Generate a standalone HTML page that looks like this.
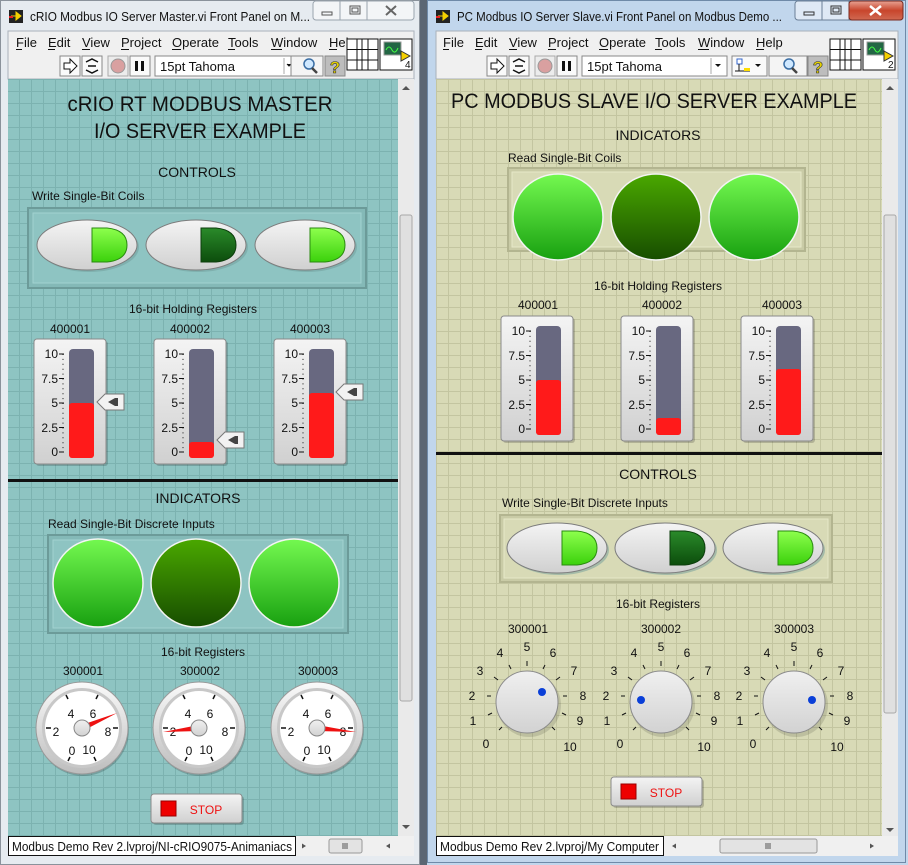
<!DOCTYPE html>
<html><head><meta charset="utf-8"><style>
html,body{margin:0;padding:0;width:908px;height:865px;overflow:hidden;background:#6d7c8a}
svg{display:block;font-family:"Liberation Sans",sans-serif}
</style></head><body>
<svg width="908" height="865" viewBox="0 0 908 865" xmlns="http://www.w3.org/2000/svg">
<defs>
<pattern id="gT" x="7" y="7" width="12" height="12" patternUnits="userSpaceOnUse"><rect width="12" height="12" fill="#8ec4c2"/><path d="M0 0.5H12M0.5 0V12" stroke="#7cb2b0" stroke-width="1"/></pattern>
<pattern id="gB" x="4" y="7" width="12" height="12" patternUnits="userSpaceOnUse"><rect width="12" height="12" fill="#d8dab6"/><path d="M0 0.5H12M0.5 0V12" stroke="#c3c5a0" stroke-width="1"/></pattern>
<linearGradient id="btn" x1="0" y1="0" x2="0" y2="1"><stop offset="0" stop-color="#f4f4f4"/><stop offset="1" stop-color="#d0d0d0"/></linearGradient>
<linearGradient id="ledOn" x1="0" y1="0" x2="0" y2="1"><stop offset="0" stop-color="#8dff4d"/><stop offset="1" stop-color="#3bd10c"/></linearGradient>
<linearGradient id="ledOff" x1="0" y1="0" x2="0" y2="1"><stop offset="0" stop-color="#2a8a2a"/><stop offset="1" stop-color="#0c4d0c"/></linearGradient>
<linearGradient id="bigOn" x1="0" y1="0" x2="0" y2="1"><stop offset="0" stop-color="#74f950"/><stop offset="1" stop-color="#18a010"/></linearGradient>
<linearGradient id="bigOff" x1="0" y1="0" x2="0" y2="1"><stop offset="0" stop-color="#4aa800"/><stop offset="1" stop-color="#174d00"/></linearGradient>
<linearGradient id="knob" x1="0" y1="0" x2="0" y2="1"><stop offset="0" stop-color="#f0f0f0"/><stop offset="1" stop-color="#d2d2d2"/></linearGradient>
<linearGradient id="bez" x1="0" y1="0" x2="0" y2="1"><stop offset="0" stop-color="#fafafa"/><stop offset="1" stop-color="#bdbdbd"/></linearGradient>
<linearGradient id="redC" x1="0" y1="0" x2="0" y2="1"><stop offset="0" stop-color="#e8a393"/><stop offset="0.5" stop-color="#c8452c"/><stop offset="1" stop-color="#d06a52"/></linearGradient>

<g id="wbtn"><ellipse cx="2" cy="2" rx="50" ry="25" fill="#6f9b99" opacity="0.5"/><ellipse cx="0" cy="0" rx="50" ry="25" fill="url(#btn)" stroke="#7c7c7c"/></g>
<path id="ledD" d="M5,-17 H20 Q40,-15 40,0 Q40,15 20,17 H5 Z"/>

<g id="sbox"><rect x="2" y="2" width="72" height="125" rx="3" fill="#000" opacity="0.18"/><rect x="0" y="0" width="72" height="125" rx="3" fill="url(#btn)" stroke="#8a8a8a"/>
<rect x="35" y="10" width="25" height="109" rx="4" fill="#686880"/>
<g font-size="12" text-anchor="end" fill="#111"><text x="24" y="19">10</text><text x="24" y="44">7.5</text><text x="24" y="68">5</text><text x="24" y="93">2.5</text><text x="24" y="117">0</text></g>
<path d="M25 15H30M25 39.5H30M25 64H30M25 88.5H30M25 113H30" stroke="#111"/>
<path d="M29 15V113" stroke="#111" stroke-dasharray="1 3.9"/>
</g>
<g id="thumb"><path d="M0,8 L8,0 H27 V16 H8 Z" fill="#f2f2f2" stroke="#777"/><path d="M11,8 L18,4 V12 Z" fill="#444"/><rect x="18" y="4" width="3" height="8" fill="#444"/></g>

<g id="gauge"><circle cx="1" cy="2" r="46" fill="#000" opacity="0.18"/><circle r="46" fill="url(#bez)" stroke="#999"/><circle r="40" fill="#c8c8c8"/><circle r="37" fill="#fff"/>
<path d="M-16,-33 L-14,-29 M16,-33 L14,-29 M-36,0 H-31 M36,0 H31 M-14,33 L-12,29 M14,33 L12,29" stroke="#111" stroke-width="1.5"/>
<g font-size="12" text-anchor="middle" fill="#111"><text x="-11" y="-10">4</text><text x="11" y="-10">6</text><text x="-26" y="8">2</text><text x="26" y="8">8</text><text x="-10" y="27">0</text><text x="7" y="26">10</text></g></g>
<g id="hub"><circle r="8" fill="url(#knob)" stroke="#888"/></g>

<g id="knobG"><circle cx="2" cy="3" r="32" fill="#000" opacity="0.12"/><circle r="31" fill="url(#knob)" stroke="#8a8a8a"/>
<g stroke="#111"><path d="M-25,25 L-28,28"/><path d="M-35,11 L-39,13"/><path d="M-36,-6 L-40,-6"/><path d="M-29,-22 L-33,-25"/><path d="M-16,-33 L-18,-37"/><path d="M0,-36 V-41"/><path d="M16,-33 L18,-37"/><path d="M29,-22 L33,-25"/><path d="M36,-6 L40,-6"/><path d="M35,11 L39,13"/><path d="M25,25 L28,28"/></g>
<g font-size="12" text-anchor="middle" fill="#111"><text x="-41" y="46">0</text><text x="-54" y="23">1</text><text x="-55" y="-2">2</text><text x="-47" y="-27">3</text><text x="-27" y="-45">4</text><text x="0" y="-51">5</text><text x="26" y="-45">6</text><text x="47" y="-27">7</text><text x="56" y="-2">8</text><text x="53" y="23">9</text><text x="43" y="49">10</text></g></g>

<g id="stopb"><rect x="2" y="2" width="91" height="29" rx="3" fill="#000" opacity="0.18"/><rect width="91" height="29" rx="3" fill="url(#btn)" stroke="#8a8a8a"/><rect x="10" y="7" width="15" height="15" fill="#ee0000" stroke="#900"/><text x="55" y="20" font-size="12" fill="#ee1111" text-anchor="middle">STOP</text></g>
</defs>

<!-- LEFT WINDOW frame -->
<rect x="0" y="0" width="420" height="865" fill="#e6ebf0"/>
<rect x="0.5" y="0.5" width="419" height="864" fill="none" stroke="#8a929b"/>
<rect x="420" y="0" width="7" height="865" fill="#5b6673"/>
<rect x="9" y="10" width="14" height="13" fill="#222"/><path d="M11,16 H21 M16,12 L21,16 L16,20 Z" stroke="#f5d000" fill="#f5d000"/><path d="M9,17 H13" stroke="#e22" stroke-width="2"/>
<text x="30" y="21" font-size="13" fill="#111" textLength="280" lengthAdjust="spacingAndGlyphs">cRIO Modbus IO Server Master.vi Front Panel on M...</text>
<rect x="313" y="1" width="101" height="19" rx="3" fill="#f3f5f7" stroke="#9aa4ae"/>
<path d="M340 1V20M367 1V20" stroke="#9aa4ae"/>
<rect x="322" y="12" width="10" height="3" fill="none" stroke="#555"/>
<rect x="350" y="6" width="10" height="8" fill="none" stroke="#555"/><rect x="352" y="8" width="6" height="4" fill="none" stroke="#555"/>
<path d="M386,6 L396,15 M396,6 L386,15" stroke="#666" stroke-width="2"/>
<rect x="8" y="31" width="406" height="48" fill="#f0f0f0" stroke="#a9b1ba"/>
<g font-size="13" fill="#111"><text x="16" y="47">File</text><text x="48" y="47">Edit</text><text x="82" y="47">View</text><text x="121" y="47">Project</text><text x="172" y="47">Operate</text><text x="228" y="47">Tools</text><text x="271" y="47">Window</text><text x="329" y="47">Hel</text></g>
<g stroke="#111"><path d="M16 49.5H22M48 49.5H55M82 49.5H90M121 49.5H129M172 49.5H181M228 49.5H235M271 49.5H282M329 49.5H337"/></g>
<rect x="60" y="56" width="20" height="20" fill="#fafafa" stroke="#888"/><path d="M64,63 H70 V59 L77,66 L70,73 V69 H64 Z" fill="#fff" stroke="#111"/>
<rect x="82" y="56" width="20" height="20" fill="#fafafa" stroke="#888"/><path d="M86,62 L92,59 L98,62 M86,70 L92,73 L98,70 M88,66 H96" stroke="#111" fill="none" stroke-width="1.5"/>
<rect x="108" y="56" width="20" height="20" fill="#ececec" stroke="#aaa"/><circle cx="118" cy="66" r="7" fill="#d9a0a0" stroke="#999"/>
<rect x="130" y="56" width="20" height="20" fill="#fafafa" stroke="#888"/><rect x="135" y="61" width="3" height="10" fill="#111"/><rect x="141" y="61" width="3" height="10" fill="#111"/>
<rect x="155" y="56" width="136" height="20" fill="#fff" stroke="#888"/><text x="160" y="71" font-size="13" fill="#111">15pt Tahoma</text><path d="M284,58 V74" stroke="#aaa"/><path d="M287,64 L289,66 L291,64" fill="#111" stroke="#111"/>
<rect x="291" y="56" width="32" height="20" fill="#f4f4f4" stroke="#888"/><circle cx="309" cy="64" r="5" fill="#cfe8ff" stroke="#3a6ea5" stroke-width="1.5"/><path d="M312,68 L317,73" stroke="#444" stroke-width="2.5"/>
<rect x="325" y="56" width="20" height="20" fill="#bdbdbd" stroke="#888"/><text x="335" y="73" font-size="17" font-weight="bold" fill="#e8d400" stroke="#333" stroke-width="0.6" text-anchor="middle">?</text>
<rect x="347" y="39" width="31" height="31" fill="#fff" stroke="#111"/><path d="M347 49.5H378M347 60H378M357 39V70M368 39V70M362 39V70" stroke="#111"/>
<rect x="380" y="39" width="32" height="31" fill="#fff" stroke="#111"/><rect x="384" y="42" width="17" height="13" fill="#264" stroke="#999"/><path d="M386,50 Q389,44 392,50 Q395,55 398,48" stroke="#4f4" fill="none"/><path d="M401,51 L410,56 L401,61 Z" fill="#f5d000" stroke="#333"/><text x="405" y="68" font-size="10" fill="#111">4</text>
<!-- left panel -->
<rect x="8" y="79" width="390" height="757" fill="url(#gT)"/>
<rect x="398" y="79" width="16" height="757" fill="#eaeaea"/><rect x="400" y="215" width="12" height="486" rx="2" fill="#e0e0e0" stroke="#a8a8a8"/>
<path d="M402,90 L406,86 L410,90 Z" fill="#555"/><path d="M402,825 L406,829 L410,825 Z" fill="#555"/>
<rect x="8" y="836" width="406" height="20" fill="#f0f0f0"/>
<rect x="8.5" y="836.5" width="287" height="19" fill="#fff" stroke="#111"/>
<text x="12" y="851" font-size="12.5" fill="#111" textLength="280" lengthAdjust="spacingAndGlyphs">Modbus Demo Rev 2.lvproj/NI-cRIO9075-Animaniacs</text>
<rect x="329" y="839" width="33" height="14" rx="2" fill="#e3e3e3" stroke="#999"/><path d="M343 843V849M345 843V849M347 843V849" stroke="#555"/>
<path d="M306,846 L302,843.5 V848.5 Z M386,846 L390,843.5 V848.5 Z" fill="#555"/>

<g font-size="21" text-anchor="middle" fill="#111"><text x="200" y="111" textLength="265" lengthAdjust="spacingAndGlyphs">cRIO RT MODBUS MASTER</text><text x="200" y="138" textLength="212" lengthAdjust="spacingAndGlyphs">I/O SERVER EXAMPLE</text></g>
<text x="197" y="177" font-size="14" text-anchor="middle" fill="#111">CONTROLS</text>
<text x="32" y="200" font-size="12" fill="#111">Write Single-Bit Coils</text>
<rect x="28" y="208" width="338" height="80" fill="#84b9b7" stroke="#6c9b99" stroke-width="2"/><rect x="33" y="213" width="328" height="70" fill="#8ec4c2" stroke="#a2d2d0"/>
<use href="#wbtn" x="87" y="245"/><use href="#wbtn" x="196" y="245"/><use href="#wbtn" x="305" y="245"/>
<use href="#ledD" x="87" y="245" fill="url(#ledOn)" stroke="#2a8a10"/><use href="#ledD" x="196" y="245" fill="url(#ledOff)" stroke="#0c3d0c"/><use href="#ledD" x="305" y="245" fill="url(#ledOn)" stroke="#2a8a10"/>
<text x="193" y="313" font-size="12" text-anchor="middle" fill="#111">16-bit Holding Registers</text>
<g font-size="12" text-anchor="middle" fill="#111"><text x="70" y="333">400001</text><text x="190" y="333">400002</text><text x="310" y="333">400003</text></g>
<use href="#sbox" x="34" y="339"/><use href="#sbox" x="154" y="339"/><use href="#sbox" x="274" y="339"/>
<rect x="69" y="403" width="25" height="55" rx="3" fill="#ff1a1a"/><rect x="189" y="442" width="25" height="16" rx="3" fill="#ff1a1a"/><rect x="309" y="393" width="25" height="65" rx="3" fill="#ff1a1a"/>
<use href="#thumb" x="97" y="394"/><use href="#thumb" x="217" y="432"/><use href="#thumb" x="336" y="384"/>
<rect x="8" y="479" width="390" height="3" fill="#111"/>
<text x="198" y="503" font-size="14" text-anchor="middle" fill="#111">INDICATORS</text>
<text x="48" y="528" font-size="12" fill="#111">Read Single-Bit Discrete Inputs</text>
<rect x="48" y="535" width="300" height="98" fill="#84b9b7" stroke="#6c9b99" stroke-width="2"/><rect x="53" y="540" width="290" height="88" fill="#8ec4c2" stroke="#a2d2d0"/>
<g stroke="#f4f4f4" stroke-width="1.5"><ellipse cx="98" cy="583" rx="45" ry="44" fill="url(#bigOn)"/><ellipse cx="196" cy="583" rx="45" ry="44" fill="url(#bigOff)"/><ellipse cx="294" cy="583" rx="45" ry="44" fill="url(#bigOn)"/></g>
<text x="203" y="656" font-size="12" text-anchor="middle" fill="#111">16-bit Registers</text>
<g font-size="12" text-anchor="middle" fill="#111"><text x="83" y="675">300001</text><text x="200" y="675">300002</text><text x="318" y="675">300003</text></g>
<use href="#gauge" x="82" y="728"/><use href="#gauge" x="199" y="728"/><use href="#gauge" x="317" y="728"/>
<polygon points="117,713 83.2,730.8 80.8,725.2" fill="#ee1111"/>
<polygon points="163,732 199.3,731 198.7,725" fill="#ee1111"/>
<polygon points="356,732 317.3,725 316.7,731" fill="#ee1111"/>
<use href="#hub" x="82" y="728"/><use href="#hub" x="199" y="728"/><use href="#hub" x="317" y="728"/>
<use href="#stopb" x="151" y="794"/>

<!-- RIGHT WINDOW -->
<rect x="427" y="0" width="481" height="865" fill="#c1d6ec"/>
<rect x="427.5" y="0.5" width="478" height="862" fill="none" stroke="#6f8aa8"/>
<rect x="436" y="10" width="14" height="13" fill="#222"/><path d="M438,16 H448 M443,12 L448,16 L443,20 Z" stroke="#f5d000" fill="#f5d000"/><path d="M436,17 H440" stroke="#e22" stroke-width="2"/>
<text x="457" y="21" font-size="13" fill="#111" textLength="325" lengthAdjust="spacingAndGlyphs">PC Modbus IO Server Slave.vi Front Panel on Modbus Demo ...</text>
<rect x="795" y="1" width="108" height="19" rx="3" fill="#dfe9f5" stroke="#6b7f96"/>
<path d="M822 1V20M849 1V20" stroke="#6b7f96"/>
<rect x="849" y="1" width="54" height="19" rx="3" fill="url(#redC)" stroke="#7a2a20"/>
<rect x="804" y="12" width="10" height="3" fill="none" stroke="#333"/>
<rect x="831" y="6" width="10" height="8" fill="none" stroke="#333"/><rect x="833" y="8" width="6" height="4" fill="none" stroke="#333"/>
<path d="M870,6 L881,15 M881,6 L870,15" stroke="#fff" stroke-width="2.5"/>
<rect x="436" y="31" width="462" height="48" fill="#f0f0f0" stroke="#a9b1ba"/>
<g font-size="13" fill="#111"><text x="443" y="47">File</text><text x="475" y="47">Edit</text><text x="509" y="47">View</text><text x="548" y="47">Project</text><text x="599" y="47">Operate</text><text x="655" y="47">Tools</text><text x="698" y="47">Window</text><text x="756" y="47">Help</text></g>
<g stroke="#111"><path d="M443 49.5H449M475 49.5H482M509 49.5H517M548 49.5H556M599 49.5H608M655 49.5H662M698 49.5H709M756 49.5H764"/></g>
<rect x="487" y="56" width="20" height="20" fill="#fafafa" stroke="#888"/><path d="M491,63 H497 V59 L504,66 L497,73 V69 H491 Z" fill="#fff" stroke="#111"/>
<rect x="509" y="56" width="20" height="20" fill="#fafafa" stroke="#888"/><path d="M513,62 L519,59 L525,62 M513,70 L519,73 L525,70 M515,66 H523" stroke="#111" fill="none" stroke-width="1.5"/>
<rect x="535" y="56" width="20" height="20" fill="#ececec" stroke="#aaa"/><circle cx="545" cy="66" r="7" fill="#d9a0a0" stroke="#999"/>
<rect x="557" y="56" width="20" height="20" fill="#fafafa" stroke="#888"/><rect x="562" y="61" width="3" height="10" fill="#111"/><rect x="568" y="61" width="3" height="10" fill="#111"/>
<rect x="582" y="56" width="145" height="20" fill="#fff" stroke="#888"/><text x="587" y="71" font-size="13" fill="#111">15pt Tahoma</text><path d="M711,58 V74" stroke="#aaa"/><path d="M715,64 L718,67 L721,64 Z" fill="#111"/>
<rect x="732" y="56" width="35" height="20" fill="#fafafa" stroke="#888"/><rect x="737" y="59" width="5" height="5" fill="#fff" stroke="#36c"/><path d="M739,64 V71 M735,71 H750" stroke="#111"/><rect x="744" y="68" width="6" height="3" fill="#fd0"/><path d="M755,64 L758,67 L761,64 Z" fill="#111"/>
<rect x="769" y="56" width="38" height="20" fill="#f4f4f4" stroke="#888"/><circle cx="789" cy="64" r="5" fill="#cfe8ff" stroke="#3a6ea5" stroke-width="1.5"/><path d="M792,68 L797,73" stroke="#444" stroke-width="2.5"/>
<rect x="808" y="56" width="20" height="20" fill="#bdbdbd" stroke="#888"/><text x="818" y="73" font-size="17" font-weight="bold" fill="#e8d400" stroke="#333" stroke-width="0.6" text-anchor="middle">?</text>
<rect x="830" y="39" width="31" height="31" fill="#fff" stroke="#111"/><path d="M830 49.5H861M830 60H861M840 39V70M851 39V70M845 39V70" stroke="#111"/>
<rect x="863" y="39" width="32" height="31" fill="#fff" stroke="#111"/><rect x="867" y="42" width="17" height="13" fill="#264" stroke="#999"/><path d="M869,50 Q872,44 875,50 Q878,55 881,48" stroke="#4f4" fill="none"/><path d="M884,51 L893,56 L884,61 Z" fill="#f5d000" stroke="#333"/><text x="888" y="68" font-size="10" fill="#111">2</text>

<rect x="436" y="79" width="446" height="757" fill="url(#gB)"/>
<rect x="882" y="79" width="16" height="757" fill="#eaeaea"/><rect x="884" y="215" width="12" height="498" rx="2" fill="#e0e0e0" stroke="#a8a8a8"/>
<path d="M886,90 L890,86 L894,90 Z" fill="#555"/><path d="M886,828 L890,832 L894,828 Z" fill="#555"/>
<rect x="436" y="836" width="462" height="20" fill="#f0f0f0"/>
<rect x="436.5" y="836.5" width="227" height="19" fill="#fff" stroke="#111"/>
<text x="440" y="851" font-size="12.5" fill="#111" textLength="219" lengthAdjust="spacingAndGlyphs">Modbus Demo Rev 2.lvproj/My Computer</text>
<rect x="720" y="839" width="97" height="14" rx="2" fill="#e3e3e3" stroke="#999"/><path d="M766 843V849M768 843V849M770 843V849" stroke="#555"/>
<path d="M672,846 L676,843.5 V848.5 Z M874,846 L870,843.5 V848.5 Z" fill="#555"/>

<text x="654" y="108" font-size="21" text-anchor="middle" fill="#111" textLength="406" lengthAdjust="spacingAndGlyphs">PC MODBUS SLAVE I/O SERVER EXAMPLE</text>
<text x="658" y="140" font-size="14" text-anchor="middle" fill="#111">INDICATORS</text>
<text x="508" y="162" font-size="12" fill="#111">Read Single-Bit Coils</text>
<rect x="508" y="168" width="297" height="83" fill="#c9cba6" stroke="#b3b590" stroke-width="2"/><rect x="512" y="172" width="289" height="75" fill="#d8dab6" stroke="#e6e8c8"/>
<g stroke="#f4f4f4" stroke-width="1.5"><ellipse cx="558" cy="217" rx="45" ry="43" fill="url(#bigOn)"/><ellipse cx="656" cy="217" rx="45" ry="43" fill="url(#bigOff)"/><ellipse cx="754" cy="217" rx="45" ry="43" fill="url(#bigOn)"/></g>
<text x="658" y="290" font-size="12" text-anchor="middle" fill="#111">16-bit Holding Registers</text>
<g font-size="12" text-anchor="middle" fill="#111"><text x="538" y="309">400001</text><text x="662" y="309">400002</text><text x="782" y="309">400003</text></g>
<use href="#sbox" x="501" y="316"/><use href="#sbox" x="621" y="316"/><use href="#sbox" x="741" y="316"/>
<rect x="536" y="380" width="25" height="55" rx="3" fill="#ff1a1a"/><rect x="656" y="418" width="25" height="17" rx="3" fill="#ff1a1a"/><rect x="776" y="369" width="25" height="66" rx="3" fill="#ff1a1a"/>
<rect x="436" y="452" width="446" height="3" fill="#111"/>
<text x="658" y="479" font-size="14" text-anchor="middle" fill="#111">CONTROLS</text>
<text x="502" y="507" font-size="12" fill="#111">Write Single-Bit Discrete Inputs</text>
<rect x="500" y="515" width="332" height="67" fill="#c9cba6" stroke="#b3b590" stroke-width="2"/><rect x="504" y="519" width="324" height="59" fill="#d8dab6" stroke="#e6e8c8"/>
<use href="#wbtn" x="557" y="548"/><use href="#wbtn" x="665" y="548"/><use href="#wbtn" x="773" y="548"/>
<use href="#ledD" x="557" y="548" fill="url(#ledOn)" stroke="#2a8a10"/><use href="#ledD" x="665" y="548" fill="url(#ledOff)" stroke="#0c3d0c"/><use href="#ledD" x="773" y="548" fill="url(#ledOn)" stroke="#2a8a10"/>
<text x="658" y="608" font-size="12" text-anchor="middle" fill="#111">16-bit Registers</text>
<g font-size="12" text-anchor="middle" fill="#111"><text x="528" y="633">300001</text><text x="661" y="633">300002</text><text x="794" y="633">300003</text></g>
<use href="#knobG" x="527" y="702"/><use href="#knobG" x="661" y="702"/><use href="#knobG" x="794" y="702"/>
<circle cx="542" cy="692" r="4" fill="#0a3fd8"/><circle cx="641" cy="700" r="4" fill="#0a3fd8"/><circle cx="812" cy="700" r="4" fill="#0a3fd8"/>
<use href="#stopb" x="611" y="777"/>
</svg>
</body></html>
